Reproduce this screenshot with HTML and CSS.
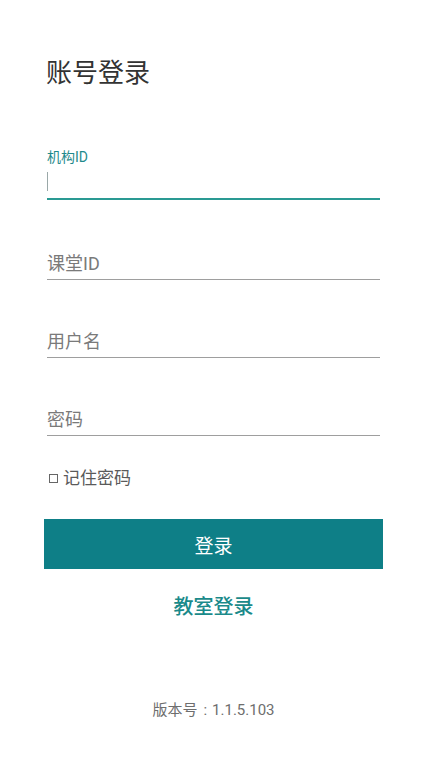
FILE: index.html
```html
<!DOCTYPE html>
<html lang="zh-CN">
<head>
<meta charset="utf-8">
<title>账号登录</title>
<link rel="stylesheet" href="styles.css">
</head>
<body>
<div class="page">
  <h1 class="title">账号登录</h1>
  <div class="field field-active">
    <div class="field-label">机构ID</div>
    <div class="field-input"><span class="cursor"></span></div>
  </div>
  <div class="field field-idle f2"><span class="hint">课堂ID</span></div>
  <div class="field field-idle f3"><span class="hint">用户名</span></div>
  <div class="field field-idle f4"><span class="hint">密码</span></div>
  <label class="remember"><span class="box"></span><span>记住密码</span></label>
  <button class="login-btn">登录</button>
  <div class="room-login">教室登录</div>
  <div class="version">版本号<span class="colon">:</span>1.1.5.103</div>
</div>
</body>
</html>
```

FILE: styles.css
```css
* { box-sizing: border-box; }
html, body {
  margin: 0;
  padding: 0;
  background: #ffffff;
  font-family: Roboto, "Noto Sans CJK SC", sans-serif;
}
.page {
  width: 427px;
  height: 760px;
  padding: 0 47px;
  display: flex;
  flex-direction: column;
}
.title {
  margin: 58px 0 0 -1px;
  font-size: 26px;
  line-height: 30px;
  font-weight: 400;
  color: #333333;
}
.field-active {
  margin-top: 59px;
}
.field-label {
  font-size: 14px;
  line-height: 20px;
  color: #1f8a8c;
}
.field-input {
  height: 33px;
  border-bottom: 2px solid #2a9a93;
  padding-top: 5px;
}
.cursor {
  display: block;
  width: 1px;
  height: 19px;
  background: #9aa8a8;
}
.field-idle {
  border-bottom: 1px solid #9e9e9e;
  padding-bottom: 3px;
}
.f2 { margin-top: 52px; }
.f3 { margin-top: 50px; }
.f4 { margin-top: 50px; }
.hint {
  display: block;
  font-size: 18px;
  line-height: 24px;
  color: #7a7a7a;
}
.remember {
  margin-top: 31px;
  display: flex;
  align-items: center;
  gap: 5px;
  font-size: 17px;
  line-height: 22px;
  color: #5a5a5a;
}
.box {
  width: 9px;
  height: 9px;
  border: 1px solid #666;
  margin-left: 2px;
}
.login-btn {
  margin: 30px -3px 0 -3px;
  height: 50px;
  border: none;
  background: #0e7f87;
  color: #ffffff;
  font-family: inherit;
  font-size: 19px;
  padding: 0;
}
.room-login {
  margin-top: 25px;
  text-align: center;
  font-size: 20px;
  line-height: 26px;
  font-weight: 500;
  color: #1a8a8a;
}
.version {
  margin-top: 80px;
  text-align: center;
  font-size: 15px;
  line-height: 20px;
  color: #6e6e6e;
}
.colon {
  display: inline-block;
  margin: 0 5px 0 6px;
}
```
